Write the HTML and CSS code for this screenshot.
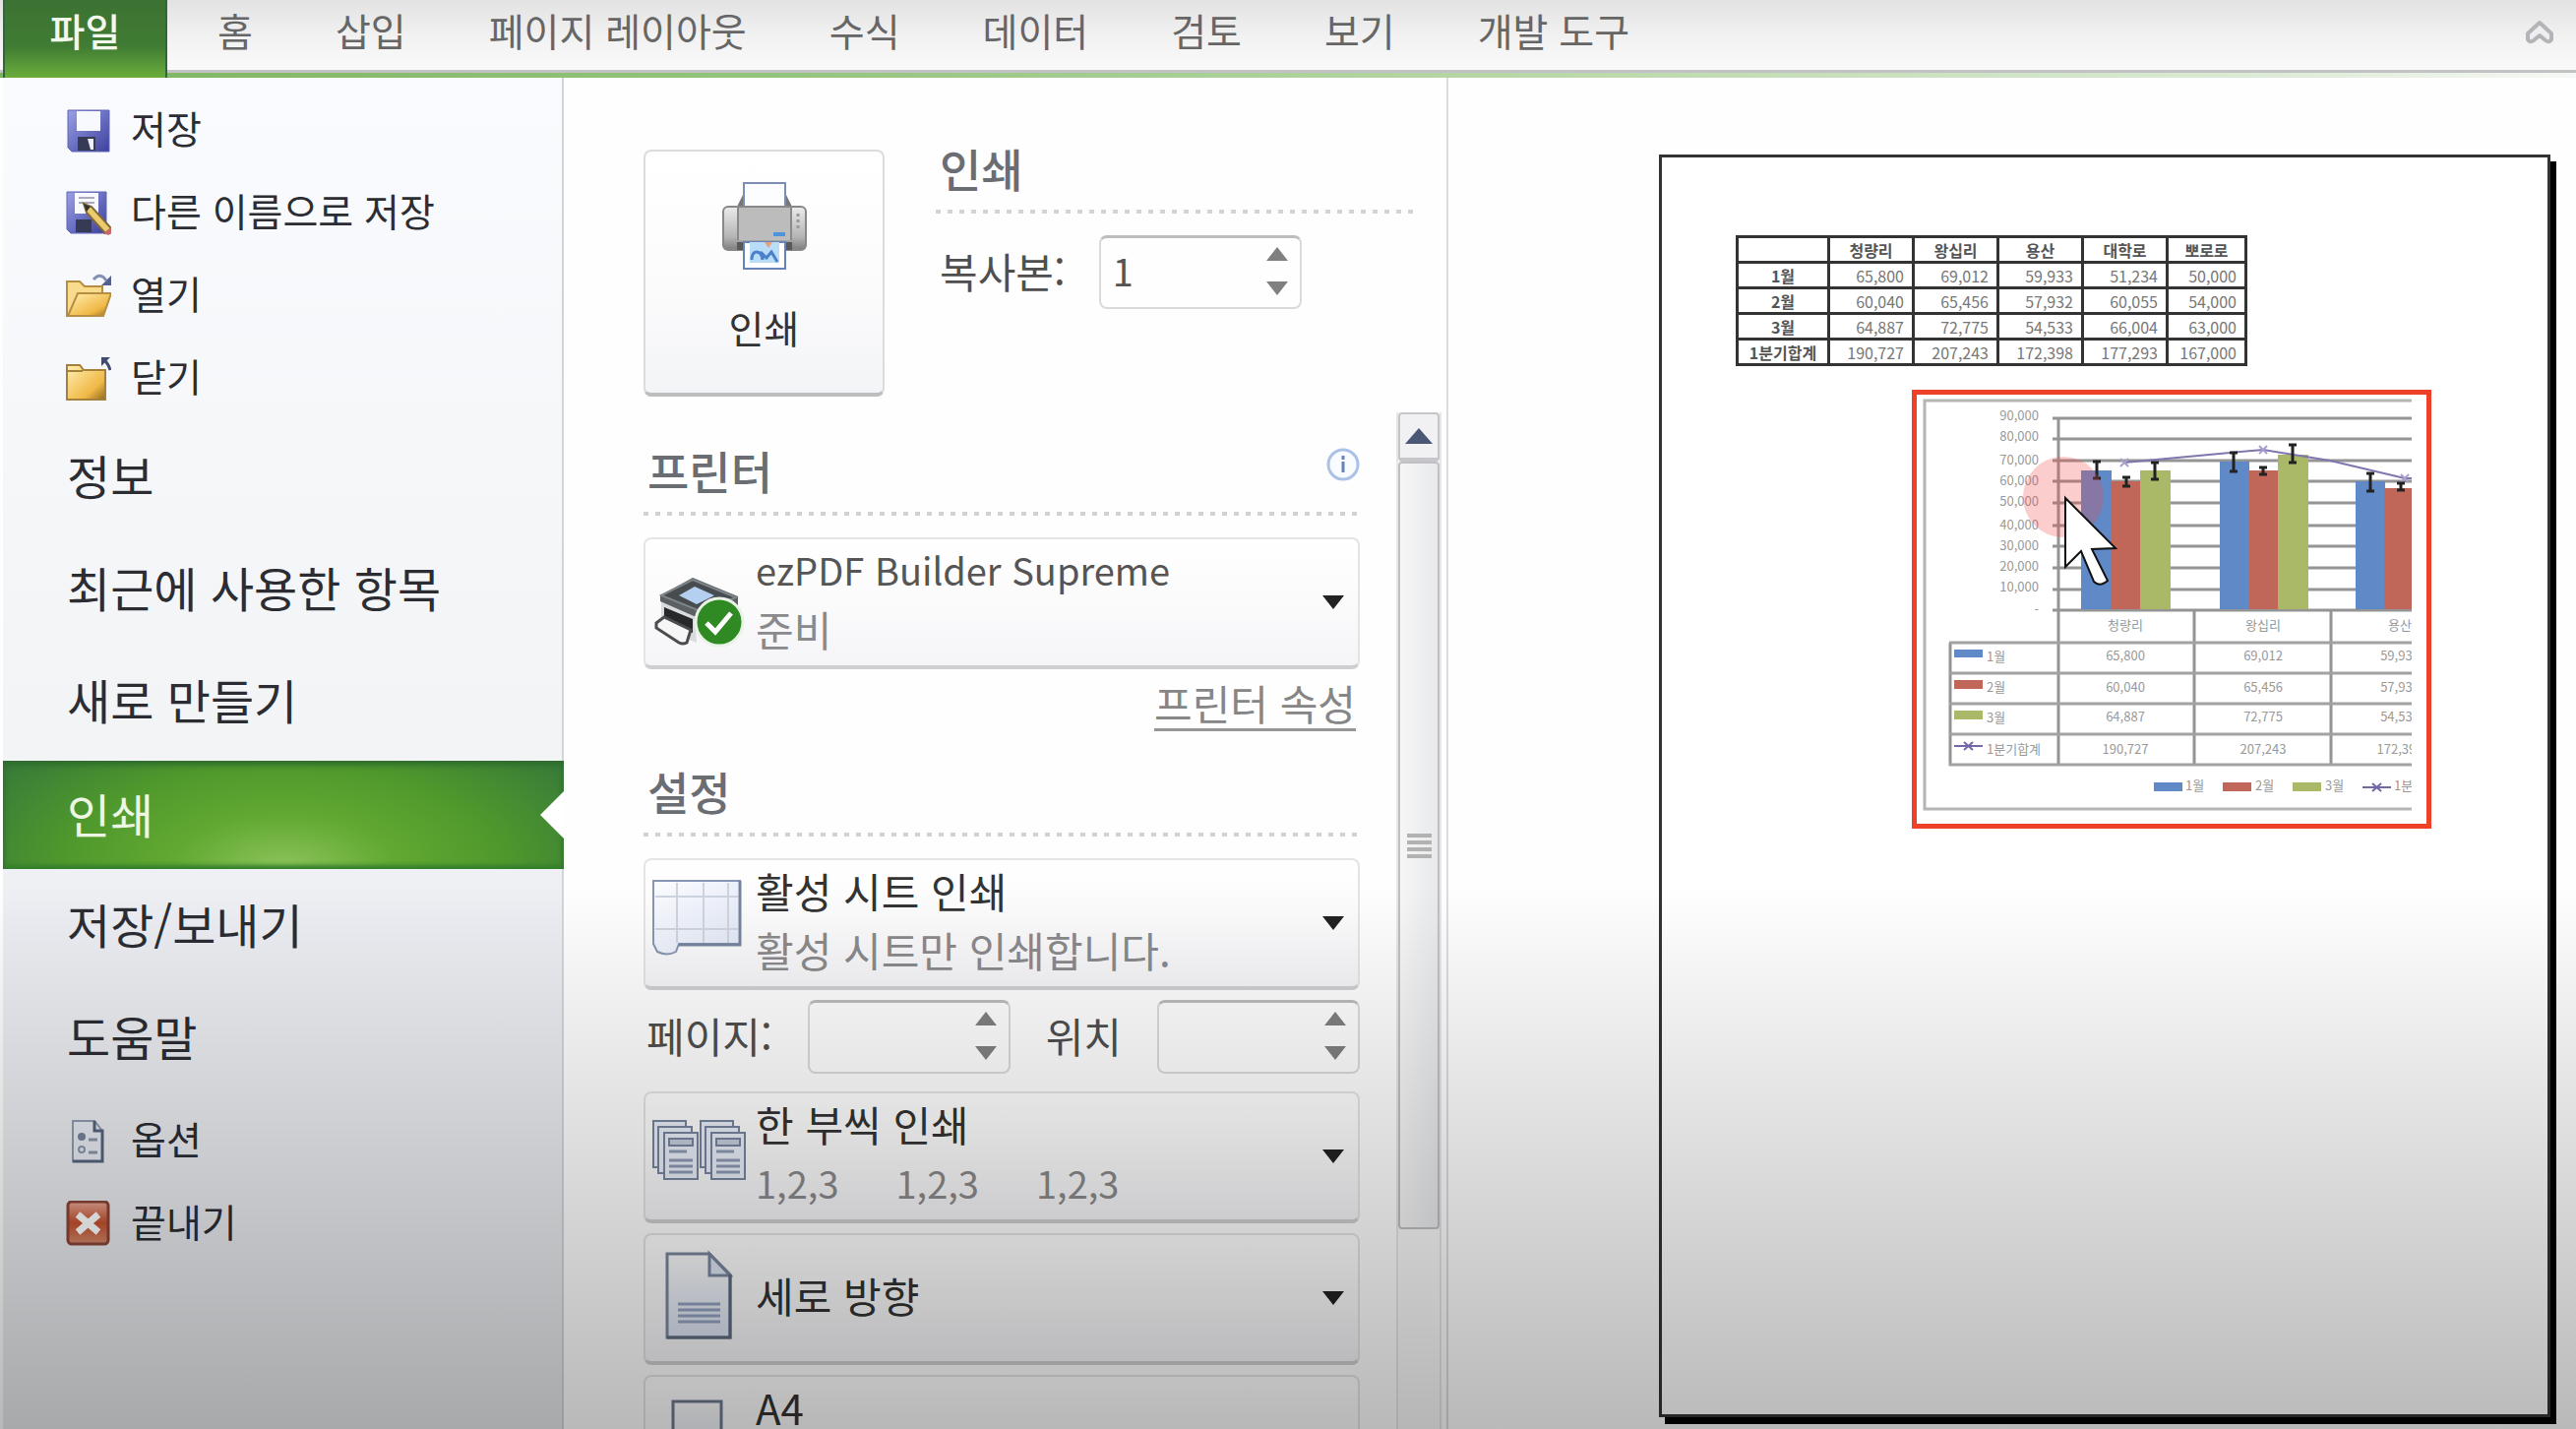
FILE: index.html
```html
<!DOCTYPE html>
<html lang="ko">
<head>
<meta charset="utf-8">
<title>인쇄</title>
<link rel="stylesheet" href="styles.css">
</head>
<body>
<div class="app">
  <header class="ribbon">
    <button class="file-tab" type="button">파일</button>
    <nav class="tabs">
      <a href="#home">홈</a>
      <a href="#insert">삽입</a>
      <a href="#layout">페이지 레이아웃</a>
      <a href="#formula">수식</a>
      <a href="#data">데이터</a>
      <a href="#review">검토</a>
      <a href="#view">보기</a>
      <a href="#dev">개발 도구</a>
    </nav>
    <button class="collapse" type="button" aria-label="리본 최소화">
      <svg width="32" height="26" viewBox="0 0 32 26"><path d="M16 3 L28 14 V20 Q26 24 22 21 L16 16 L10 21 Q6 24 4 20 V14 Z" fill="#eeeef0" stroke="#b4b4b8" stroke-width="4" stroke-linejoin="round"/></svg>
    </button>
  </header>

  <div class="backstage">
    <nav class="sidebar">
      <a class="small" href="#save">
        <svg class="icon" viewBox="0 0 46 46"><defs><linearGradient id="disk" x1="0" y1="0" x2="1" y2="1"><stop offset="0" stop-color="#9aa0e6"/><stop offset="1" stop-color="#3d409c"/></linearGradient></defs><path d="M2 3H44V45H6L2 41Z" fill="url(#disk)" stroke="#6065b8"/><rect x="11" y="4" width="24" height="20" fill="#f7f9ff"/><rect x="12" y="30" width="18" height="14" fill="#363a55"/><path d="M22 32h6v11h-3z" fill="#eef"/></svg>
        <span>저장</span></a>
      <a class="small" href="#saveas">
        <svg class="icon" viewBox="0 0 46 46"><path d="M1 2H41V44H5L1 40Z" fill="url(#disk)" stroke="#6065b8"/><rect x="9" y="3" width="24" height="21" fill="#f7f9ff"/><path d="M13 8H29M13 13H29" stroke="#aab" stroke-width="2"/><rect x="10" y="30" width="16" height="13" fill="#363a55"/><path d="M18 14L26 17L46 39L40 44L21 23Z" fill="#eccb6c" stroke="#80683a" stroke-width="2"/><path d="M18 14L25 17L21 22Z" fill="#333"/><path d="M46 38L39 44L43 46L47 44Z" fill="#c9686c"/></svg>
        <span>다른 이름으로 저장</span></a>
      <a class="small" href="#open">
        <svg class="icon" viewBox="0 0 46 46"><defs><linearGradient id="fold" x1="0" y1="0" x2="1" y2="1"><stop offset="0" stop-color="#fff0b4"/><stop offset=".7" stop-color="#f0b845"/><stop offset="1" stop-color="#8d6620"/></linearGradient></defs><path d="M1 44V9H14L19 14H37V44Z" fill="#f8dc8b" stroke="#b58e43" stroke-width="2"/><path d="M2 44L12 21H46L38 44Z" fill="url(#fold)" stroke="#b58e43" stroke-width="2"/><path d="M28 7Q35 -1 41 8" fill="none" stroke="#8290b4" stroke-width="3"/><path d="M46 3V13H36Z" fill="#52618e"/></svg>
        <span>열기</span></a>
      <a class="small" href="#close">
        <svg class="icon" viewBox="0 0 46 46"><path d="M1 45V10H14L18 15H40V45Z" fill="url(#fold)" stroke="#a58039" stroke-width="2"/><path d="M2 16H17" stroke="#a58039" stroke-width="2"/><path d="M36 2H45L36 11Z" fill="#414d70"/><path d="M38 4Q43 8 45 15" fill="none" stroke="#414d70" stroke-width="3"/></svg>
        <span>닫기</span></a>
      <a class="large" href="#info">정보</a>
      <a class="large" href="#recent">최근에 사용한 항목</a>
      <a class="large" href="#new">새로 만들기</a>
      <a class="large current" href="#print" aria-current="page">인쇄</a>
      <a class="large" href="#share">저장/보내기</a>
      <a class="large last" href="#help">도움말</a>
      <a class="small" href="#options">
        <svg class="icon" viewBox="0 0 46 46"><path d="M7 3H29L37 13V44H7Z" fill="#e7ebf2" stroke="#8f9bb0" stroke-width="2"/><path d="M29 3V13H37V44H7" fill="none" stroke="#56647c" stroke-width="3"/><circle cx="16" cy="19" r="4" fill="#77839a"/><circle cx="16" cy="32" r="3" fill="none" stroke="#8a95a8" stroke-width="2"/><path d="M23 22H32M23 35H32" stroke="#8a95a8" stroke-width="3"/></svg>
        <span>옵션</span></a>
      <a class="small" href="#exit">
        <svg class="icon" viewBox="0 0 46 46"><defs><linearGradient id="exit" x1="0" y1="0" x2="0" y2="1"><stop offset="0" stop-color="#e8a897"/><stop offset=".5" stop-color="#c4502c"/><stop offset="1" stop-color="#d3896c"/></linearGradient></defs><rect x="2" y="1" width="41" height="43" rx="4" fill="url(#exit)" stroke="#8a4438" stroke-width="3"/><path d="M12 14L33 32M33 14L12 32" stroke="#fff" stroke-width="7"/></svg>
        <span>끝내기</span></a>
    </nav>

    <main class="panel">
      <section class="print-top">
        <button class="print-button" type="button">
          <svg width="88" height="92" viewBox="0 0 88 92"><defs><linearGradient id="prn" x1="0" y1="0" x2="0" y2="1"><stop offset="0" stop-color="#ececec"/><stop offset=".7" stop-color="#b4b4b4"/><stop offset="1" stop-color="#7d7d7d"/></linearGradient></defs><path d="M16 26L24 10H64L72 26Z" fill="#777"/><path d="M23 2H65V28H23Z" fill="#fcfdff" stroke="#7d8db3" stroke-width="2"/><rect x="2" y="26" width="84" height="44" rx="5" fill="url(#prn)" stroke="#888" stroke-width="2"/><rect x="17" y="27" width="54" height="33" fill="#bcbcbc"/><path d="M17 27V60M71 27V60" stroke="#8a8a8a" stroke-width="2"/><path d="M53 54H65" stroke="#4c93dc" stroke-width="4"/><path d="M78 33V48" stroke="#999" stroke-width="3" stroke-dasharray="3 3"/><path d="M16 62H72V70H16Z" fill="#595959"/><path d="M23 62H65V89H23Z" fill="#fff" stroke="#6783b8" stroke-width="2"/><path d="M29 62H59V83H29Z" fill="#b9dcf7"/><path d="M31 80Q31 72 36 72T42 80M42 80V74L46 78L51 72L57 82" fill="none" stroke="#4d80cb" stroke-width="3"/><path d="M44 62H52L48 68Z" fill="#e7a17c"/></svg>
          <span>인쇄</span>
        </button>
        <div class="copies">
          <h2>인쇄</h2>
          <div class="dots"></div>
          <div class="copies-row">
            <label for="copies">복사본:</label>
            <div class="spinner">
              <input id="copies" type="text" value="1">
              <div class="steps">
                <button type="button" aria-label="복사본 늘리기"><svg width="22" height="14" viewBox="0 0 22 14"><path d="M11 0L22 14H0Z"/></svg></button>
                <button type="button" aria-label="복사본 줄이기"><svg width="22" height="14" viewBox="0 0 22 14"><path d="M0 0H22L11 14Z"/></svg></button>
              </div>
            </div>
          </div>
        </div>
      </section>

      <div class="scroll-area">
        <div class="settings">
          <div class="heading-row">
            <h2>프린터</h2>
            <button class="info" type="button" aria-label="프린터 상태">
              <svg width="34" height="34" viewBox="0 0 34 34"><circle cx="17" cy="17" r="15" fill="#f8fbff" stroke="#a9c2e6" stroke-width="3"/><path d="M17 14V25M17 8V12" stroke="#6583b8" stroke-width="3"/></svg>
            </button>
          </div>
          <div class="dots"></div>

          <button class="dropdown" type="button" aria-haspopup="listbox">
            <svg class="pic" viewBox="0 0 96 110"><path d="M10 48L44 64L46 96L10 82Z" fill="#d9dbde"/><path d="M13 60L42 72V86L13 74Z" fill="#26282a"/><path d="M5 76L13 70L40 83L36 96Q32 98 28 96L5 81Z" fill="#f6f6f6" stroke="#4a4c4e" stroke-width="3"/><path d="M9 48L42 30L88 49V60L50 72L9 54Z" fill="#5b6063"/><path d="M10 48L42 32L86 50L52 65Z" fill="#474c50" stroke="#7f8588" stroke-width="2"/><path d="M28 48L44 39L64 48L46 57Z" fill="#b5cff0"/><circle cx="69" cy="75" r="24" fill="#2f8a23" stroke="#e8f2e6" stroke-width="3"/><path d="M56 76L65 85L81 66" fill="none" stroke="#fff" stroke-width="5"/></svg>
            <span class="lines two"><span class="latin">ezPDF Builder Supreme</span><span class="sub">준비</span></span>
            <svg class="caret" viewBox="0 0 22 14"><path d="M0 0H22L11 14Z"/></svg>
          </button>
          <a class="props" href="#props">프린터 속성</a>

          <h2>설정</h2>
          <div class="dots"></div>

          <button class="dropdown" type="button" aria-haspopup="listbox">
            <svg class="pic" viewBox="0 0 96 110"><defs><linearGradient id="sheet" x1="0" y1="0" x2="1" y2="1"><stop offset="0" stop-color="#fbfcff"/><stop offset="1" stop-color="#e0e6f5"/></linearGradient></defs><path d="M2 12H90V76H28L25 84Q16 89 6 84L2 76Z" fill="url(#sheet)" stroke="#8796b2" stroke-width="2"/><path d="M4 28H88M4 61H88M26 14V75M53 14V75M78 14V75" stroke="#ced4df" stroke-width="2"/><path d="M90 12V77H28" fill="none" stroke="#76859f" stroke-width="3"/></svg>
            <span class="lines two"><span>활성 시트 인쇄</span><span class="sub">활성 시트만 인쇄합니다.</span></span>
            <svg class="caret" viewBox="0 0 22 14"><path d="M0 0H22L11 14Z"/></svg>
          </button>

          <div class="range-row">
            <label for="from">페이지:</label>
            <div class="spinner">
              <input id="from" type="text">
              <div class="steps">
                <button type="button" aria-label="시작 페이지 늘리기"><svg width="22" height="14" viewBox="0 0 22 14"><path d="M11 0L22 14H0Z"/></svg></button>
                <button type="button" aria-label="시작 페이지 줄이기"><svg width="22" height="14" viewBox="0 0 22 14"><path d="M0 0H22L11 14Z"/></svg></button>
              </div>
            </div>
            <label for="to">위치</label>
            <div class="spinner">
              <input id="to" type="text">
              <div class="steps">
                <button type="button" aria-label="끝 페이지 늘리기"><svg width="22" height="14" viewBox="0 0 22 14"><path d="M11 0L22 14H0Z"/></svg></button>
                <button type="button" aria-label="끝 페이지 줄이기"><svg width="22" height="14" viewBox="0 0 22 14"><path d="M0 0H22L11 14Z"/></svg></button>
              </div>
            </div>
          </div>

          <div class="stack">
            <button class="dropdown" type="button" aria-haspopup="listbox">
              <svg class="pic" viewBox="0 0 96 110"><defs><g id="pages" stroke="#7685a0" stroke-width="2" fill="#e9eef8"><path d="M2 19H35V66H2Z"/><path d="M7 25H41V72H7Z"/><path d="M13 31H47V78H13Z"/><path d="M18 37H42V44H18Z" fill="#c6cedd"/><path d="M18 50H36M18 59H42M18 65H42M18 71H42" stroke="#8d9ab3" stroke-width="3"/></g></defs><use href="#pages"/><use href="#pages" x="48"/></svg>
              <span class="lines two"><span>한 부씩 인쇄</span><span class="sub sets"><span>1,2,3</span><span>1,2,3</span><span>1,2,3</span></span></span>
              <svg class="caret" viewBox="0 0 22 14"><path d="M0 0H22L11 14Z"/></svg>
            </button>
            <button class="dropdown" type="button" aria-haspopup="listbox">
              <svg class="pic" viewBox="0 0 96 110"><defs><linearGradient id="doc" x1="0" y1="0" x2="0" y2="1"><stop offset="0" stop-color="#fbfbfb"/><stop offset="1" stop-color="#dbe3f3"/></linearGradient></defs><path d="M16 10H59L80 31V95H16Z" fill="url(#doc)" stroke="#7a879e" stroke-width="3"/><path d="M59 10V32H80Z" fill="#dfe6f5" stroke="#7a879e" stroke-width="3"/><path d="M80 31V95H16" fill="none" stroke="#5c6a80" stroke-width="3"/><path d="M27 61H70M27 67H70M27 73H70M27 79H70" stroke="#92a2c0" stroke-width="3"/></svg>
              <span class="lines"><span>세로 방향</span></span>
              <svg class="caret" viewBox="0 0 22 14"><path d="M0 0H22L11 14Z"/></svg>
            </button>
            <button class="dropdown" type="button" aria-haspopup="listbox">
              <svg class="pic" viewBox="0 0 96 110"><path d="M22 16H71V90H22Z" fill="url(#doc)" stroke="#6c7990" stroke-width="3"/></svg>
              <span class="lines two"><span>A4</span></span>
              <svg class="caret" viewBox="0 0 22 14"><path d="M0 0H22L11 14Z"/></svg>
            </button>
          </div>
        </div>

        <div class="scrollbar">
          <button class="scroll-up" type="button" aria-label="위로"><svg width="28" height="16" viewBox="0 0 28 16"><path d="M14 0L28 16H0Z" fill="#4b5875"/></svg></button>
          <div class="thumb"><i></i><i></i><i></i><i></i></div>
        </div>
      </div>
    </main>

    <section class="preview">
      <div class="paper">
        <table class="sheet">
          <colgroup><col class="c-name"><col class="c-num"><col class="c-num"><col class="c-num"><col class="c-num"><col class="c-end"></colgroup>
          <tr><th></th><th>청량리</th><th>왕십리</th><th>용산</th><th>대학로</th><th>뽀로로</th></tr>
          <tr><th>1월</th><td>65,800</td><td>69,012</td><td>59,933</td><td>51,234</td><td>50,000</td></tr>
          <tr><th>2월</th><td>60,040</td><td>65,456</td><td>57,932</td><td>60,055</td><td>54,000</td></tr>
          <tr><th>3월</th><td>64,887</td><td>72,775</td><td>54,533</td><td>66,004</td><td>63,000</td></tr>
          <tr><th>1분기합계</th><td>190,727</td><td>207,243</td><td>172,398</td><td>177,293</td><td>167,000</td></tr>
        </table>

        <div class="chart-frame">
          <svg class="chart" viewBox="0 0 518 436">
            <defs>
              <clipPath id="cut"><rect x="0" y="0" width="503" height="436"/></clipPath>
              <g id="cross" stroke="#7566a8" stroke-width="2"><path d="M0 0H29"/><path d="M10 -4L19 4M19 -4L10 4"/></g>
            </defs>
            <g clip-path="url(#cut)">
              <path d="M510 6H8V421H510" fill="none" stroke="#b5b5b5" stroke-width="3"/>
              <path d="M138 24H510M138 45H510M138 67H510M138 88H510M138 110H510M138 133H510M138 154H510M138 176H510M138 198H510M138 219H510" stroke="#949494" stroke-width="3"/>
              <path d="M144 23V377M34 252V377M282 219V377M421 219V377" stroke="#949494" stroke-width="3"/>
              <path d="M33 252H510M33 283H510M33 314H510M33 345H510M33 376H510" stroke="#a2a2a2" stroke-width="3"/>
              <path d="M167 77H198V218H167ZM308 68H338V218H308ZM446 88H476V218H446Z" fill="#5f8ac7"/>
              <path d="M197 88H228V218H197ZM338 77H367V218H338ZM475 95H505V218H475Z" fill="#c1675a"/>
              <path d="M227 77H258V218H227ZM367 61H398V218H367Z" fill="#a9b967"/>
              <path d="M211 69L352 56L420 67L496 85H510" fill="none" stroke="#8275ae" stroke-width="2"/>
              <path d="M207 65L215 73M215 65L207 73M348 52L356 60M356 52L348 60M492 81L500 89M500 81L492 89" stroke="#a89fcb" stroke-width="2"/>
              <path d="M183 68V85M179 68H187M179 85H187M213 84V93M209 84H217M209 93H217M242 69V86M238 69H246M238 86H246M322 59V78M318 59H326M318 78H326M352 74V81M348 74H356M348 81H356M382 51V69M378 51H386M378 69H386M461 80V98M457 80H465M457 98H465M492 90V97M488 90H496M488 97H496" stroke="#222" stroke-width="3"/>
              <g class="axis">
                <text x="124" y="26">90,000</text><text x="124" y="47">80,000</text><text x="124" y="71">70,000</text><text x="124" y="92">60,000</text><text x="124" y="113">50,000</text><text x="124" y="137">40,000</text><text x="124" y="158">30,000</text><text x="124" y="179">20,000</text><text x="124" y="200">10,000</text><text x="124" y="223">-</text>
              </g>
              <g class="cells">
                <text x="212" y="239">청량리</text><text x="352" y="239">왕십리</text><text x="491" y="239">용산</text>
                <text x="212" y="270">65,800</text><text x="352" y="270">69,012</text><text x="491" y="270">59,933</text>
                <text x="212" y="302">60,040</text><text x="352" y="302">65,456</text><text x="491" y="302">57,932</text>
                <text x="212" y="332">64,887</text><text x="352" y="332">72,775</text><text x="491" y="332">54,533</text>
                <text x="212" y="365">190,727</text><text x="352" y="365">207,243</text><text x="491" y="365">172,398</text>
              </g>
              <path d="M38 259H67V267H38ZM241 394H270V403H241Z" fill="#5f8ac7"/>
              <path d="M38 290H67V299H38ZM311 394H340V403H311Z" fill="#c1675a"/>
              <path d="M38 321H67V330H38ZM382 394H411V403H382Z" fill="#a9b967"/>
              <use href="#cross" x="38" y="357"/><use href="#cross" x="453" y="399"/>
              <g class="keys">
                <text x="71" y="271">1월</text><text x="71" y="302">2월</text><text x="71" y="333">3월</text><text x="71" y="365">1분기합계</text>
                <text x="273" y="402">1월</text><text x="344" y="402">2월</text><text x="415" y="402">3월</text><text x="485" y="402">1분</text>
              </g>
            </g>
            <circle cx="149" cy="104" r="41" fill="#f04848" fill-opacity=".27"/>
            <path d="M151 105V175L167 159L180 190Q186 196 194 189L178 157L202 156Z" fill="#fff" stroke="#111" stroke-width="2"/>
          </svg>
        </div>
      </div>
    </section>
  </div>
  <div class="shade"></div>
</div>
</body>
</html>
```
FILE: styles.css
```css
* { box-sizing: border-box; }
body {
  margin: 0;
  font-family: "Noto Sans CJK KR", "Noto Sans", sans-serif;
  font-size: 42px;
  color: #333;
  background: #fefefe;
}
button, input { font: inherit; color: inherit; }
button { padding: 0; border: 0; background: none; text-align: left; }
a { color: inherit; text-decoration: none; }
h2 { margin: 0; padding-bottom: 4px; font-size: 46px; line-height: 52px; font-weight: 500; color: #6a6d72; }
svg { display: block; flex: none; }

.app { position: relative; height: 100vh; display: flex; flex-direction: column; overflow: hidden; padding-left: 3px; }

/* The whole window darkens towards its lower edge. */
.shade {
  position: absolute;
  inset: 0;
  pointer-events: none;
  background: linear-gradient(rgba(0, 0, 0, 0) 62%, rgba(0, 0, 0, .27));
}

/* Ribbon */
.ribbon {
  flex: none;
  display: flex;
  height: 79px;
  margin-left: -3px;
  padding-left: 3px;
  font-size: 39px;
  line-height: 60px;
  color: #666;
  background:
    linear-gradient(#c0c2c4, #c0c2c4) 0 71px / 100% 3px no-repeat,
    linear-gradient(90deg, #7cb45f, #93c47c 30%, #b9d8a8 60%, #dcebd5 88%, #f6f8f5) 0 74px / 100% 5px no-repeat,
    linear-gradient(#e2e2e2, #f1f1f1 45%, #fafafa 71px);
}
.file-tab {
  width: 167px;
  height: 79px;
  padding-bottom: 19px;
  text-align: center;
  font-weight: 500;
  color: #f2f8ec;
  border: solid #2e6a38;
  border-width: 0 2px;
  background: linear-gradient(#3c7233, #407c33 60%, #6bae3c);
}
.tabs { display: flex; flex: 1; margin-left: 9px; }
.tabs a { padding: 0 42px; }
.collapse { align-self: flex-start; margin: 20px 21px 0 0; }

.backstage { flex: 1; min-height: 0; display: flex; }

/* Sidebar */
.sidebar {
  flex: none;
  width: 570px;
  padding-top: 11px;
  color: #2b2d33;
  background: linear-gradient(#f9fbfe, #f2f3f5 55%, #eceef3 62%, #e6e8eb);
  border-right: 2px solid #d3d4d8;
}
.small { display: flex; align-items: center; gap: 20px; height: 84px; padding-left: 64px; font-size: 39px; line-height: 56px; }
.small span { padding-bottom: 6px; }
.icon { width: 46px; height: 46px; }
.large { display: block; padding-left: 65px; font-size: 48px; line-height: 112px; padding-bottom: 2px; }
.large.last { margin-bottom: 7px; }
.large.current {
  position: relative;
  width: 570px;
  height: 110px;
  margin: 5px 0 -1px;
  line-height: 106px;
  color: #edf6e2;
  background: radial-gradient(ellipse 56% 140% at 50% 100%, #8cc45c, #62a932 35%, #4f982c 70%, #36783a 115%);
  box-shadow: inset 0 4px 6px #2c6a2c, inset 0 -4px 4px #35802c;
}
.large.current::after {
  content: "";
  position: absolute;
  right: 0;
  top: 31px;
  border: solid transparent;
  border-width: 24px 24px 24px 0;
  border-right-color: #fff;
}

/* Print panel */
.panel {
  flex: none;
  display: flex;
  flex-direction: column;
  width: 899px;
  padding: 65px 0 0 81px;
  border-right: 2px solid #dcdcdc;
}
.print-top { flex: none; display: flex; gap: 52px; padding-right: 32px; margin-bottom: 16px; }
.print-button {
  display: flex;
  flex-direction: column;
  align-items: center;
  gap: 28px;
  width: 245px;
  height: 251px;
  margin-top: 8px;
  padding-top: 30px;
  font-size: 39px;
  line-height: 56px;
  border: 2px solid #dcdcde;
  border-bottom: 4px solid #bdbdbf;
  border-radius: 8px;
  background: linear-gradient(#fff, #fbfbfc 60%, #f3f4f7);
}
.copies { flex: 1; }
.copies h2 { padding-left: 4px; }
.dots {
  height: 4px;
  margin: 13px 0 22px;
  background: repeating-linear-gradient(90deg, #d2d2d2 0 5px, transparent 5px 12px);
}
.copies-row { display: flex; align-items: center; gap: 34px; padding-left: 4px; }
label { padding-bottom: 5px; color: #4f4f4f; }
.spinner {
  display: flex;
  width: 206px;
  height: 75px;
  border: 2px solid #dadada;
  border-top: 3px solid #bcbcbc;
  border-radius: 8px;
}
.spinner input {
  flex: 1;
  min-width: 0;
  padding: 0 0 6px 12px;
  border: 0;
  background: none;
  color: #555;
  font-size: 38px;
}
.steps { display: flex; flex-direction: column; justify-content: space-between; padding: 9px 12px 12px 0; }
.steps svg { fill: #808080; }

.scroll-area { flex: 1; min-height: 0; display: flex; justify-content: space-between; padding-right: 5px; overflow: hidden; }
.settings { width: 728px; padding-top: 32px; }
.settings h2 { padding-left: 4px; }
.heading-row { display: flex; justify-content: space-between; }
.info { align-self: flex-start; margin-top: 4px; }
.dropdown {
  display: grid;
  grid-template-columns: 96px 1fr 22px;
  column-gap: 10px;
  align-items: center;
  width: 100%;
  height: 134px;
  padding: 0 14px 0 6px;
  border: 2px solid #e4e4e6;
  border-bottom: 4px solid #cfcfd1;
  border-radius: 8px;
  background: linear-gradient(#fff, #fbfbfc 50%, #f5f5f8);
}
.pic { width: 96px; height: 110px; }
.caret { width: 22px; height: 14px; fill: #222; }
.lines { display: flex; flex-direction: column; padding-bottom: 6px; line-height: 60px; }
.lines.two { height: 126px; }
.latin { font-size: 38px; color: #555; }
.sub { color: #8a8a8c; }
.sets { display: flex; gap: 58px; font-size: 38px; }
.props {
  display: block;
  width: fit-content;
  margin: 10px 4px 34px auto;
  padding-bottom: 2px;
  line-height: 48px;
  color: #868686;
  border-bottom: 3px solid #969696;
}
.range-row { display: flex; align-items: center; justify-content: space-between; margin: 10px 0 18px; padding-left: 3px; }
.stack { display: flex; flex-direction: column; gap: 10px; }

.scrollbar { width: 46px; border: solid #e6e6e8; border-width: 0 2px; background: #f9f9f9; }
.scroll-up {
  display: flex;
  align-items: center;
  justify-content: center;
  width: 100%;
  height: 50px;
  border: 2px solid #c6c6ca;
  border-bottom-width: 4px;
  border-radius: 4px;
  background: #f1f1f4;
}
.thumb {
  display: flex;
  flex-direction: column;
  align-items: center;
  justify-content: center;
  gap: 3px;
  height: 780px;
  border: 2px solid #bfbfc4;
  border-radius: 4px;
  background: linear-gradient(90deg, #f6f6f7, #e7e9ea);
}
.thumb i { width: 25px; height: 4px; background: #b2b2b2; }

/* Preview */
.preview { flex: 1; min-width: 0; display: flex; padding: 78px 26px 12px 214px; }
.paper {
  flex: 1;
  min-width: 0;
  padding: 79px 0 0 75px;
  border: 3px solid #333;
  background: #fff;
  box-shadow: 6px 7px 0 #000;
}
.sheet { border-collapse: collapse; table-layout: fixed; width: 517px; font-size: 16px; line-height: 20px; }
.c-name { width: 93px; }
.c-num { width: 86px; }
.c-end { width: 80px; }
.sheet tr { height: 26px; }
.sheet th, .sheet td { padding: 0; border: 3px solid #333; white-space: nowrap; }
.sheet th { font-weight: 700; color: #555; text-align: center; }
.sheet td { padding-right: 8px; text-align: right; color: #777; }

.chart-frame { width: 528px; margin: 24px 0 0 179px; border: 5px solid #ee4228; background: #fff; }
.chart { width: 100%; height: auto; }
.chart text { font-size: 13px; fill: #999; }
.chart .axis { text-anchor: end; }
.chart .cells { text-anchor: middle; }
```
